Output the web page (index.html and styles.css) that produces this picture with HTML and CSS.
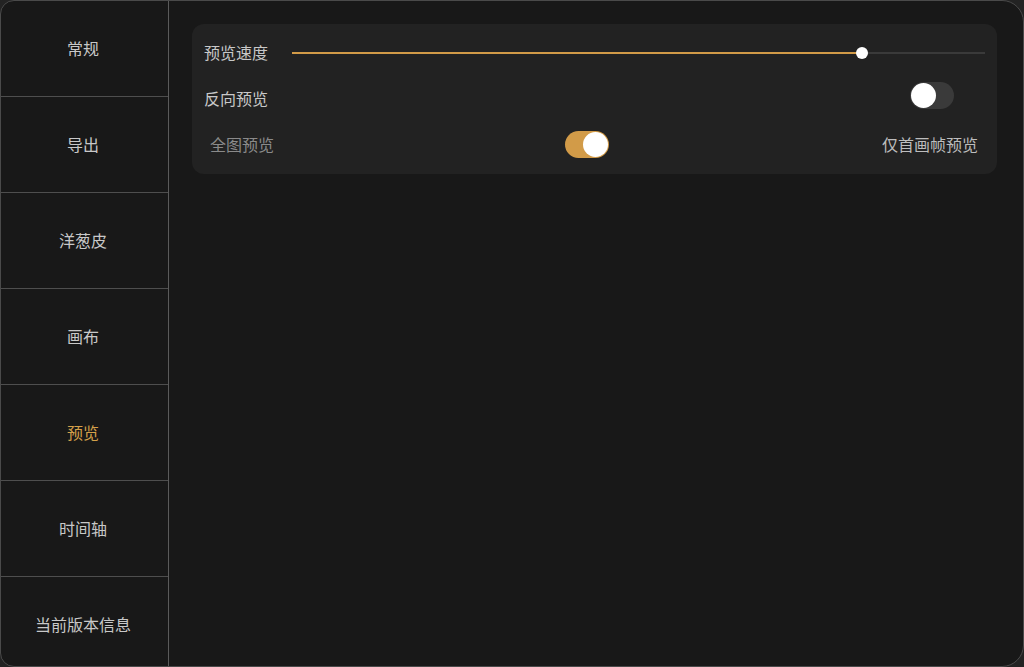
FILE: index.html
```html
<!DOCTYPE html>
<html lang="zh">
<head>
  <meta charset="UTF-8">
  <title>设置 - 预览</title>
  <link rel="stylesheet" href="styles.css">
</head>
<body>
  <div class="frame">
    <!-- Menu laterale -->
    <nav class="sidebar">
      <div class="nav-item">常规</div>
      <div class="nav-item">导出</div>
      <div class="nav-item">洋葱皮</div>
      <div class="nav-item">画布</div>
      <div class="nav-item active">预览</div>
      <div class="nav-item">时间轴</div>
      <div class="nav-item">当前版本信息</div>
    </nav>

    <main class="content">
      <div class="card">
        <div class="row">
          <span class="label">预览速度</span>
          <div class="slider">
            <div class="slider-fill" style="width: 82.3%"></div>
            <div class="slider-knob" style="left: 82.3%"></div>
          </div>
        </div>
        <div class="row">
          <span class="label">反向预览</span>
          <div class="toggle raised"><div class="toggle-knob"></div></div>
        </div>
        <div class="row row-split">
          <span class="label muted">全图预览</span>
          <div class="toggle on"><div class="toggle-knob"></div></div>
          <span class="label right">仅首画帧预览</span>
        </div>
      </div>
    </main>
  </div>
</body>
</html>
```

FILE: styles.css
```css
* { box-sizing: border-box; }
html, body { margin: 0; height: 100%; }
body {
  background: #232323;
  font-family: "Noto Sans CJK SC", "Noto Sans", sans-serif;
  font-size: 16px;
  color: #c8c8c8;
}
.frame {
  height: 667px;
  display: flex;
  background: #181818;
  border: 1px solid #4a4a4a;
  border-radius: 14px 22px 22px 14px;
  overflow: hidden;
}
/* Menu laterale */
.sidebar {
  width: 168px;
  flex-shrink: 0;
  border-right: 1px solid #5a5a5a;
  display: flex;
  flex-direction: column;
}
.nav-item {
  height: 96px;
  flex-shrink: 0;
  display: flex;
  align-items: center;
  justify-content: center;
  padding: 0 3px 2px 0;
  border-bottom: 1px solid #4e4e4e;
  line-height: 1;
}
.nav-item:last-child { border-bottom: none; }
.nav-item.active { color: #d4a04a; }

.content {
  flex: 1;
  padding: 23px 26px 0 23px;
}
.card {
  background: #222222;
  border-radius: 12px;
  padding: 5px 12px 7px 12px;
}
.row {
  height: 46px;
  display: flex;
  align-items: center;
  justify-content: space-between;
}
.label { line-height: 1; white-space: nowrap; }
.muted { color: #8a8a8a; padding-left: 6px; }
.right { color: #bdbdbd; }

/* Slider */
.slider {
  position: relative;
  flex: 1;
  height: 2px;
  margin: 2px 0 0 24px;
  background: #3a3a3a;
}
.slider-fill {
  position: absolute;
  left: 0; top: 0; bottom: 0;
  background: #d29b48;
}
.slider-knob {
  position: absolute;
  top: -5px;
  width: 12px; height: 12px;
  margin-left: -6px;
  border-radius: 50%;
  background: #fff;
}

/* Interruttore */
.toggle {
  position: relative;
  width: 44px; height: 27px;
  border-radius: 14px;
  background: #3a3a3a;
  margin-right: 31px;
}
.toggle.raised { margin-bottom: 6px; }
.toggle-knob {
  position: absolute;
  top: 1px; left: 1px;
  width: 25px; height: 25px;
  border-radius: 50%;
  background: #fff;
}
.toggle.on { background: #d29b48; margin-right: 0; margin-left: 291px; }
.toggle.on .toggle-knob { left: auto; right: 1px; }
.row-split .toggle { margin-right: auto; }
.row-split .right { margin-right: 7px; }
```
